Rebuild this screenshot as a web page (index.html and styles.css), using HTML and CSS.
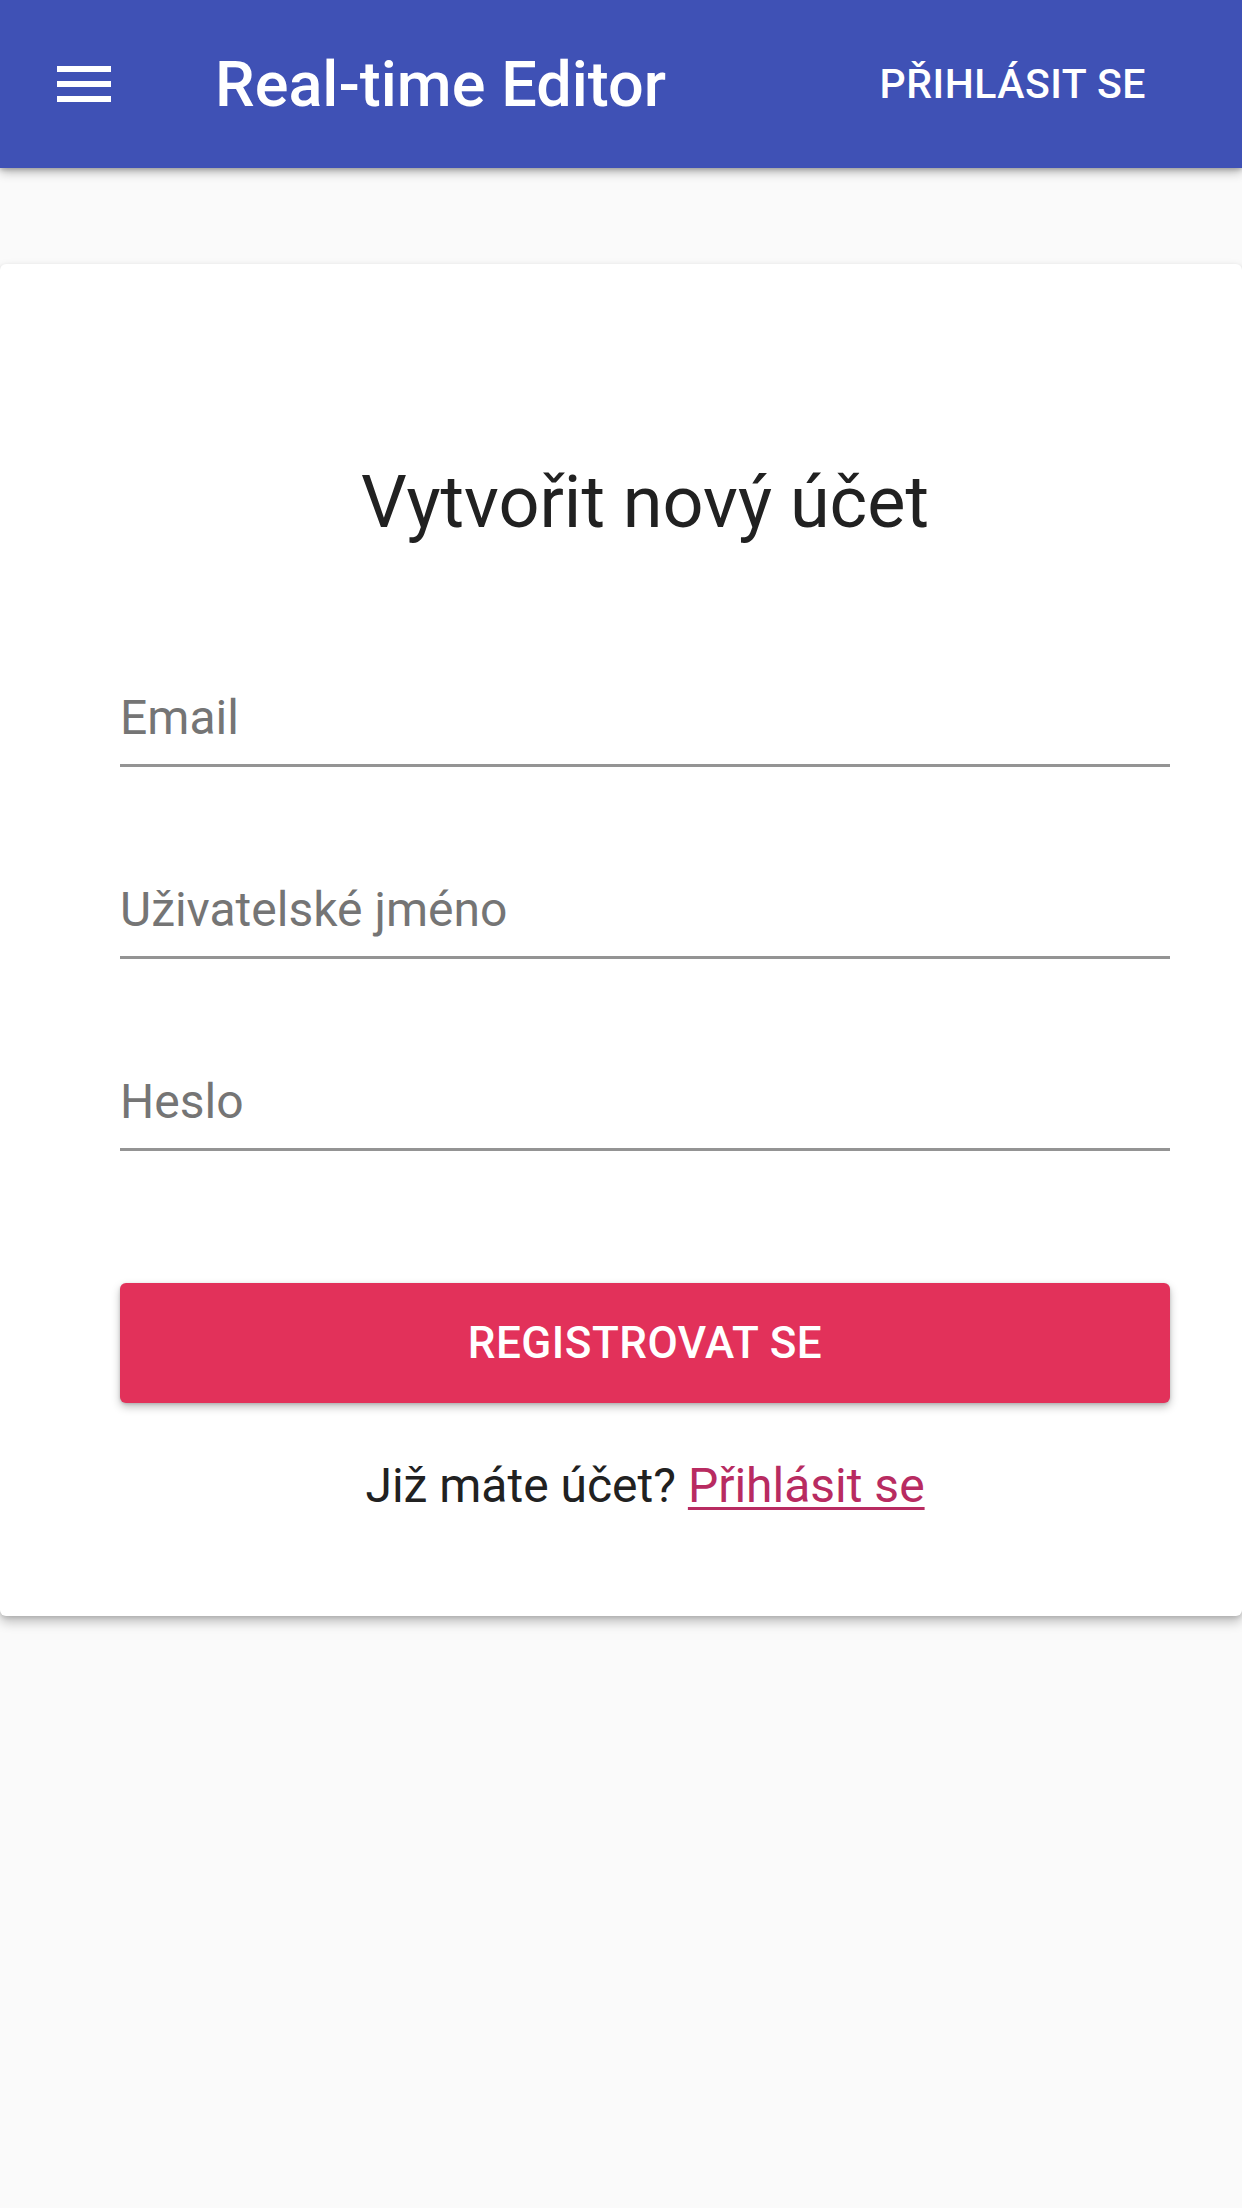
FILE: index.html
```html
<!DOCTYPE html>
<html lang="cs">
<head>
<meta charset="utf-8">
<title>Real-time Editor</title>
<link rel="stylesheet" href="styles.css">
</head>
<body>
<header class="appbar">
  <button class="menu-btn" aria-label="Menu">
    <svg viewBox="0 0 24 24" width="72" height="72"><path fill="#fff" d="M3 18h18v-2H3v2zm0-5h18v-2H3v2zm0-7v2h18V6H3z"/></svg>
  </button>
  <h1 class="appbar-title">Real-time Editor</h1>
  <a class="appbar-action" href="#">PŘIHLÁSIT SE</a>
</header>
<main class="main">
  <section class="card">
    <h2 class="card-title">Vytvořit nový účet</h2>
    <form class="form">
      <div class="field"><span class="field-label">Email</span></div>
      <div class="field"><span class="field-label">Uživatelské jméno</span></div>
      <div class="field"><span class="field-label">Heslo</span></div>
      <button type="button" class="submit">REGISTROVAT SE</button>
    </form>
    <p class="footer-text">Již máte účet? <a class="link" href="#">Přihlásit se</a></p>
  </section>
</main>
</body>
</html>
```
FILE: styles.css
```css
* { box-sizing: border-box; }
html, body { margin: 0; padding: 0; }
body {
  background: #fafafa;
  font-family: Roboto, "Noto Sans", sans-serif;
  width: 1242px;
  min-height: 2208px;
}
.appbar {
  height: 168px;
  background: #3f51b5;
  display: flex;
  align-items: center;
  box-shadow: 0 4px 10px rgba(0,0,0,0.28), 0 2px 4px rgba(0,0,0,0.18);
  position: relative;
  z-index: 2;
}
.menu-btn {
  margin-left: 48px;
  width: 72px;
  height: 72px;
  padding: 0;
  border: 0;
  background: none;
  display: flex;
}
.appbar-title {
  margin: 0 0 0 95px;
  font-size: 63px;
  font-weight: 500;
  color: #fff;
  line-height: 1;
}
.appbar-action {
  margin-left: auto;
  margin-right: 96px;
  font-size: 41px;
  font-weight: 500;
  color: #fff;
  text-decoration: none;
  letter-spacing: 0.5px;
}
.main {
  padding-top: 96px;
}
.card {
  background: #fff;
  border-radius: 6px;
  box-shadow: 0 6px 12px rgba(0,0,0,0.24), 0 2px 4px rgba(0,0,0,0.12);
  padding: 197px 72px 100px 120px;
}
.card-title {
  margin: 0;
  text-align: center;
  font-size: 72px;
  line-height: 84px;
  font-weight: 400;
  color: #212121;
}
.form {
  margin-top: 143px;
  display: flex;
  flex-direction: column;
}
.field {
  height: 79px;
  padding-bottom: 16px;
  border-bottom: 3px solid #949494;
}
.field + .field { margin-top: 113px; }
.field-label {
  display: block;
  font-size: 48px;
  line-height: 60px;
  color: #757575;
}
.submit {
  margin-top: 132px;
  height: 120px;
  border: 0;
  border-radius: 6px;
  background: #e2315a;
  color: #fff;
  font-family: Roboto, sans-serif;
  font-size: 44px;
  font-weight: 500;
  letter-spacing: 0.5px;
  box-shadow: 0 4px 8px rgba(0,0,0,0.25), 0 1px 3px rgba(0,0,0,0.15);
}
.footer-text {
  margin: 53px 0 0;
  text-align: center;
  font-size: 48px;
  line-height: 60px;
  color: #212121;
}
.link {
  color: #b82b61;
  text-decoration: underline;
  text-decoration-thickness: 3px;
  text-underline-offset: 5px;
}
```
